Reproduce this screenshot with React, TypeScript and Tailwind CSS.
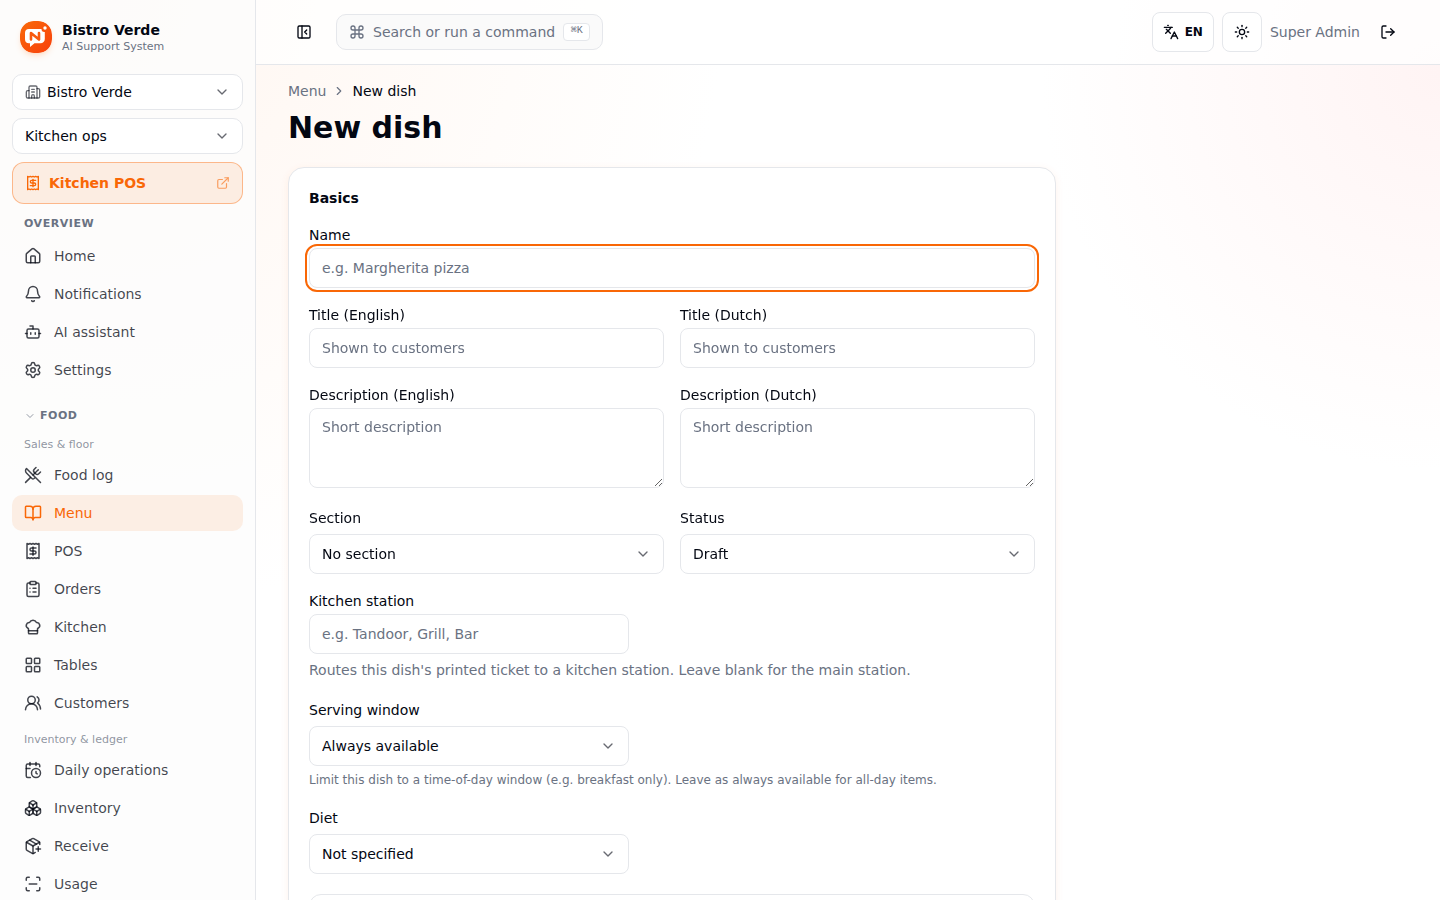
import { useState } from "react";
import type { ReactNode } from "react";
import {
  Bell,
  BookOpen,
  Bot,
  Boxes,
  Building2,
  CalendarClock,
  ChefHat,
  ChevronDown,
  ChevronRight,
  ClipboardList,
  Command,
  ExternalLink,
  House,
  Languages,
  LayoutGrid,
  LogOut,
  PackagePlus,
  PanelLeftClose,
  Receipt,
  ScanLine,
  Settings,
  Sun,
  UsersRound,
  UtensilsCrossed,
} from "lucide-react";
import type { LucideIcon } from "lucide-react";

type NavItem = { label: string; icon: LucideIcon };

const overview: NavItem[] = [
  { label: "Home", icon: House },
  { label: "Notifications", icon: Bell },
  { label: "AI assistant", icon: Bot },
  { label: "Settings", icon: Settings },
];

const sales: NavItem[] = [
  { label: "Food log", icon: UtensilsCrossed },
  { label: "Menu", icon: BookOpen },
  { label: "POS", icon: Receipt },
  { label: "Orders", icon: ClipboardList },
  { label: "Kitchen", icon: ChefHat },
  { label: "Tables", icon: LayoutGrid },
  { label: "Customers", icon: UsersRound },
];

const inventory: NavItem[] = [
  { label: "Daily operations", icon: CalendarClock },
  { label: "Inventory", icon: Boxes },
  { label: "Receive", icon: PackagePlus },
  { label: "Usage", icon: ScanLine },
];

const inputClass =
  "block w-full rounded-lg border border-gray-200 bg-white px-3 text-sm text-gray-950 placeholder:text-gray-500 focus:outline-2 focus:outline-offset-2 focus:outline-[#f96706]";

const Logo = () => (
  <svg viewBox="0 0 32 32" className="size-8 rounded-[14px] shadow-md shadow-orange-500/15" aria-hidden="true">
    <defs>
      <linearGradient id="logo-bg" x1="0" y1="0" x2="1" y2="1">
        <stop offset="0" stopColor="#f96a0a" />
        <stop offset="1" stopColor="#f8400c" />
      </linearGradient>
    </defs>
    <rect width="32" height="32" rx="13" fill="url(#logo-bg)" />
    <path d="M9 8h12.5a3 3 0 0 0 3.300 3V18a4.300 4.300 0 0 1-4.300 4.300H14.500L10 26v-3.700H9A4 4 0 0 1 5 18.300V12a4 4 0 0 1 4-4Z" fill="#fff" />
    <path d="M11 18.500v-6.500l8 6.500v-6.500" fill="none" stroke="#f85a0e" strokeWidth="2.600" strokeLinecap="round" strokeLinejoin="round" />
    <circle cx="25" cy="7" r="1.700" fill="#fff" />
  </svg>
);

const NavList = ({ items }: { items: NavItem[] }) => (
  <ul className="flex flex-col gap-0.5">
    {items.map(({ label, icon: Icon }) => (
      <li key={label}>
        <a
          href="#"
          aria-current={label === "Menu" ? "page" : undefined}
          className={
            label === "Menu"
              ? "flex h-9 items-center gap-3 rounded-[10px] bg-[#f96706]/10 px-3 text-sm text-[#f96706]"
              : "flex h-9 items-center gap-3 rounded-[10px] px-3 text-sm text-gray-950/75"
          }
        >
          <Icon className="size-[18px] shrink-0" />
          {label}
        </a>
      </li>
    ))}
  </ul>
);

const Picker = ({
  id,
  value,
  label,
  icon,
  className = "",
}: {
  id: string;
  value: string;
  label?: string;
  icon?: ReactNode;
  className?: string;
}) => (
  <div className={"grid items-center border border-gray-200 bg-white " + className}>
    {icon && <span className="pointer-events-none col-start-1 row-start-1 pl-3 text-gray-950/60">{icon}</span>}
    <select
      id={id}
      aria-label={label}
      className={
        icon
          ? "col-start-1 row-start-1 h-full w-full appearance-none rounded-lg pl-[34px] text-sm text-gray-950"
          : "col-start-1 row-start-1 h-full w-full appearance-none rounded-lg pl-3 text-sm text-gray-950"
      }
    >
      <option>{value}</option>
    </select>
    <ChevronDown className="pointer-events-none col-start-1 row-start-1 mr-3 size-4 justify-self-end text-gray-950/60" />
  </div>
);

const TextField = ({ id, label, placeholder, autoFocus }: { id: string; label: string; placeholder: string; autoFocus?: boolean }) => (
  <div>
    <label htmlFor={id} className="block text-sm leading-[22px]">
      {label}
    </label>
    <input id={id} type="text" placeholder={placeholder} autoFocus={autoFocus} className={inputClass + " mt-0.5 h-10"} />
  </div>
);

const AreaField = ({ id, label }: { id: string; label: string }) => (
  <div className="pb-1">
    <label htmlFor={id} className="block text-sm leading-[22px]">
      {label}
    </label>
    <textarea id={id} placeholder="Short description" className={inputClass + " mt-0.5 h-20 resize-y py-2"} />
  </div>
);

const SelectField = ({ id, label, value }: { id: string; label: string; value: string }) => (
  <div>
    <label htmlFor={id} className="block text-sm">
      {label}
    </label>
    <Picker id={id} value={value} className="mt-1.5 h-10 rounded-lg" />
  </div>
);

const Sidebar = () => (
  <aside className="flex w-64 shrink-0 flex-col overflow-hidden border-r border-gray-200 bg-[#fcfcfc]/80 px-3">
    <div className="mt-5 flex items-center gap-2.5 px-2">
      <Logo />
      <div>
        <p className="text-sm font-bold">Bistro Verde</p>
        <p className="text-[11px] leading-[14px] text-gray-500">AI Support System</p>
      </div>
    </div>
    <Picker
      id="venue"
      label="Restaurant"
      value="Bistro Verde"
      icon={<Building2 className="size-4" />}
      className="mt-5 h-9 shrink-0 rounded-[10px]"
    />
    <Picker id="workspace" label="Workspace" value="Kitchen ops" className="mt-2 h-9 shrink-0 rounded-[10px]" />
    <a
      href="#"
      className="mt-2 flex h-[42px] shrink-0 items-center gap-2 rounded-xl border border-[#f96706]/40 bg-[#f96706]/10 px-3 text-sm font-bold text-[#f96706]"
    >
      <Receipt className="size-4" />
      <span className="flex-1">Kitchen POS</span>
      <ExternalLink className="size-3.5 opacity-60" />
    </a>
    <nav className="mt-3">
      <h2 className="mb-1.5 px-3 text-[11px] leading-4 font-bold tracking-wider text-gray-500">OVERVIEW</h2>
      <NavList items={overview} />
      <button type="button" className="mt-5 flex h-4 items-center gap-1 px-3 text-[11px] font-bold tracking-wider text-gray-500">
        <ChevronDown className="size-3 opacity-70" />
        FOOD
      </button>
      <h3 className="mt-3 mb-1 px-3 text-[11px] leading-[17px] text-gray-500/75">Sales &amp; floor</h3>
      <NavList items={sales} />
      <h3 className="mt-2.5 mb-1 px-3 text-[11px] leading-[17px] text-gray-500/75">Inventory &amp; ledger</h3>
      <NavList items={inventory} />
    </nav>
  </aside>
);

const Header = () => (
  <header className="flex h-[65px] shrink-0 items-center border-b border-gray-200 bg-white/75 pr-8 pl-7">
    <button type="button" aria-label="Collapse sidebar" className="grid size-10 place-items-center">
      <PanelLeftClose className="size-4" />
    </button>
    <button
      type="button"
      className="ml-3 flex h-9 items-center gap-2 rounded-[10px] border border-gray-200 bg-neutral-50 px-3 text-sm text-gray-500"
    >
      <Command className="size-4" />
      Search or run a command
      <kbd className="flex h-[18px] w-[27px] items-start justify-center rounded border border-gray-200 bg-white font-mono text-[10px] leading-[14px]">
        ⌘K
      </kbd>
    </button>
    <div className="ml-auto flex items-center gap-2">
      <button type="button" className="flex h-10 items-center gap-1.5 rounded-lg border border-gray-200 bg-white px-2.5 text-xs font-bold">
        <Languages className="size-4" />
        EN
      </button>
      <button type="button" aria-label="Toggle theme" className="grid size-10 place-items-center rounded-lg border border-gray-200 bg-white">
        <Sun className="size-4" />
      </button>
      <span className="text-sm text-gray-500">Super Admin</span>
      <button type="button" aria-label="Log out" className="grid size-10 place-items-center">
        <LogOut className="size-4" />
      </button>
    </div>
  </header>
);

const DishForm = () => {
  const [hidden, setHidden] = useState(false);

  return (
    <form className="mt-5 max-w-3xl rounded-2xl border border-gray-200 bg-white p-5 shadow-[0_2px_8px_rgba(249,103,6,0.08)]">
      <h2 className="text-sm font-bold">Basics</h2>
      <div className="mt-4 flex flex-col gap-5">
        <div className="flex flex-col gap-4">
          <TextField id="name" label="Name" placeholder="e.g. Margherita pizza" autoFocus />
          <div className="grid grid-cols-2 gap-4">
            <TextField id="title-en" label="Title (English)" placeholder="Shown to customers" />
            <TextField id="title-nl" label="Title (Dutch)" placeholder="Shown to customers" />
            <AreaField id="description-en" label="Description (English)" />
            <AreaField id="description-nl" label="Description (Dutch)" />
            <SelectField id="section" label="Section" value="No section" />
            <SelectField id="status" label="Status" value="Draft" />
          </div>
          <div>
            <div className="max-w-80">
              <TextField id="station" label="Kitchen station" placeholder="e.g. Tandoor, Grill, Bar" />
            </div>
            <p className="mt-1.5 text-sm text-gray-500">
              Routes this dish's printed ticket to a kitchen station. Leave blank for the main station.
            </p>
          </div>
        </div>
        <div>
          <div className="max-w-80">
            <SelectField id="window" label="Serving window" value="Always available" />
          </div>
          <p className="mt-1.5 text-xs text-gray-500">
            Limit this dish to a time-of-day window (e.g. breakfast only). Leave as always available for all-day items.
          </p>
        </div>
        <div className="max-w-80">
          <SelectField id="diet" label="Diet" value="Not specified" />
        </div>
        <label className="flex h-16 items-center gap-3 rounded-xl border border-gray-200 px-4">
          <input type="checkbox" aria-label="Hidden" checked={hidden} onChange={(e) => setHidden(e.target.checked)} />
        </label>
      </div>
    </form>
  );
};

export default function App() {
  return (
    <div className="flex h-screen overflow-hidden bg-white bg-[radial-gradient(circle_at_8%_0%,#fff6f0_0%,transparent_38%),radial-gradient(circle_at_100%_8%,#fff4f4_0%,transparent_24%)] font-['DejaVu_Sans',sans-serif] text-gray-950">
      <Sidebar />
      <div className="flex min-w-0 flex-1 flex-col">
        <Header />
        <main className="min-h-0 flex-1 overflow-hidden px-8 pt-4">
          <nav aria-label="Breadcrumb" className="flex items-center gap-1.5 text-sm">
            <a href="#" className="text-gray-500">
              Menu
            </a>
            <ChevronRight className="size-3.5 text-gray-500" />
            <span>New dish</span>
          </nav>
          <h1 className="mt-2 text-3xl leading-[38px] font-bold">New dish</h1>
          <DishForm />
        </main>
      </div>
    </div>
  );
}
